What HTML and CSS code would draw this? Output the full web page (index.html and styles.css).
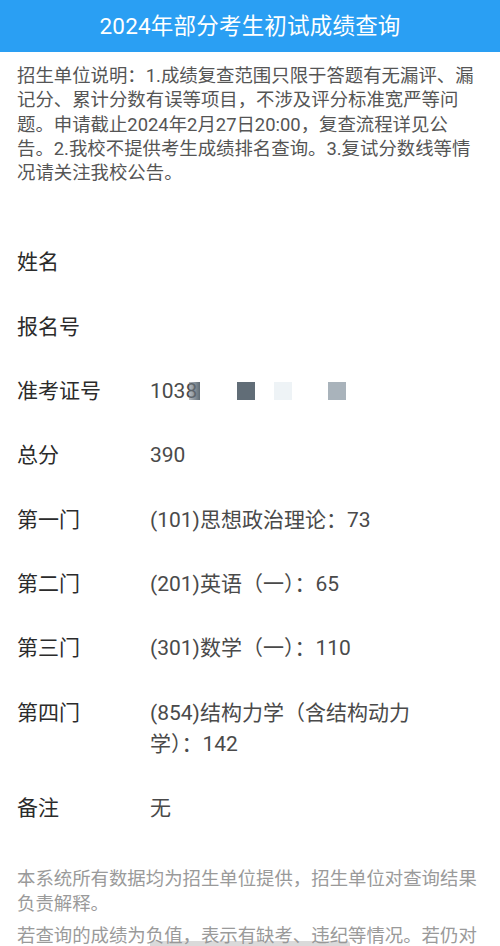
FILE: index.html
```html
<!DOCTYPE html>
<html lang="zh-CN">
<head>
<meta charset="utf-8">
<title>2024年部分考生初试成绩查询</title>
<link rel="stylesheet" href="styles.css">
</head>
<body>
<header class="topbar">2024年部分考生初试成绩查询</header>
<main class="page">
  <p class="notice">招生单位说明：1.成绩复查范围只限于答题有无漏评、漏记分、累计分数有误等项目，不涉及评分标准宽严等问题。申请截止2024年2月27日20:00，复查流程详见公告。2.我校不提供考生成绩排名查询。3.复试分数线等情况请关注我校公告。</p>
  <div class="table">
    <div class="row"><div class="label">姓名</div><div class="value"></div></div>
    <div class="row"><div class="label">报名号</div><div class="value"></div></div>
    <div class="row"><div class="label">准考证号</div><div class="value"><span class="num">1038</span><span class="blk b1"></span><span class="blk b2"></span><span class="blk b3"></span><span class="blk b4"></span></div></div>
    <div class="row"><div class="label">总分</div><div class="value">390</div></div>
    <div class="row"><div class="label">第一门</div><div class="value">(101)思想政治理论：73</div></div>
    <div class="row"><div class="label">第二门</div><div class="value">(201)英语（一）：65</div></div>
    <div class="row"><div class="label">第三门</div><div class="value">(301)数学（一）：110</div></div>
    <div class="row"><div class="label">第四门</div><div class="value">(854)结构力学（含结构动力学）：142</div></div>
    <div class="row"><div class="label">备注</div><div class="value">无</div></div>
  </div>
  <div class="footnote">
    <p>本系统所有数据均为招生单位提供，招生单位对查询结果负责解释。</p>
    <p>若查询的成绩为负值，表示有缺考、违纪等情况。若仍对查询结果有疑问，请联系招生单位。</p>
  </div>
</main>
<div class="home-indicator"></div>
</body>
</html>
```
FILE: styles.css
```css
html, body {
  margin: 0;
  padding: 0;
  background: #ffffff;
  height: 946px;
  overflow: hidden;
}
body {
  font-family: Roboto, "Noto Sans CJK SC", sans-serif;
  color: #333333;
}
.topbar {
  height: 52px;
  background: #2a9ff3;
  color: #ffffff;
  font-size: 22.5px;
  line-height: 52px;
  text-align: center;
  letter-spacing: 0.2px;
}
.page {
  padding: 0 17px;
}
.notice {
  margin: 12px 0 0;
  font-size: 18.4px;
  line-height: 24.3px;
  color: #555555;
}
.table {
  margin-top: 45px;
}
.row {
  display: flex;
  padding: 16.7px 0;
  font-size: 21px;
  line-height: 31px;
}
.label {
  width: 133px;
  flex: none;
  color: #2b2b2b;
}
.value {
  width: 292px;
  color: #4a4a4a;
}
.num {
  display: inline-block;
}
.blk {
  display: inline-block;
  width: 18px;
  height: 18px;
  vertical-align: -2px;
}
.b1 {
  width: 11px;
  margin-left: -8px;
  background: linear-gradient(90deg, rgba(110,120,130,0.5), #5f6b75);
}
.b2 { margin-left: 37px; background: #616d77; }
.b3 { margin-left: 19px; background: #eef3f6; }
.b4 { margin-left: 36px; background: #a9b3bb; }
.footnote {
  margin-top: 25px;
  font-size: 18.4px;
  line-height: 25px;
  color: #9a9a9a;
}
.footnote p {
  margin: 0 0 7px;
}
.home-indicator {
  position: fixed;
  left: 150px;
  bottom: 0;
  width: 200px;
  height: 5px;
  border-radius: 3px 3px 0 0;
  background: rgba(150,150,150,0.35);
}
```
